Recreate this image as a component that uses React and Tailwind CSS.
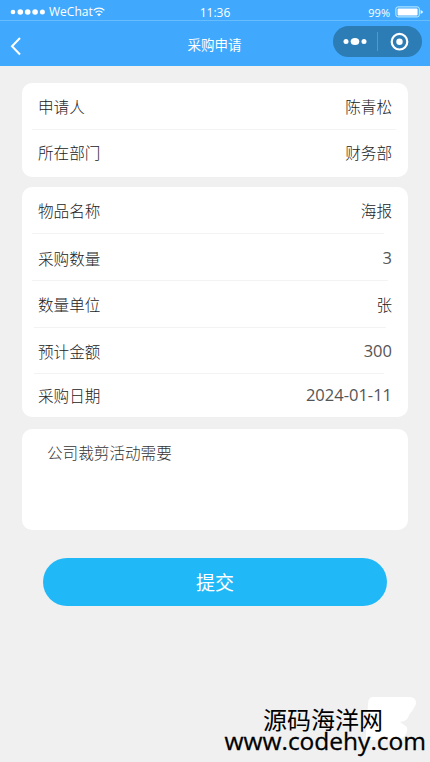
const applicant = [
  { label: "申请人", value: "陈青松", row: "h-[47px] pt-[4px]", line: "ml-[10px] mr-[12px]" },
  { label: "所在部门", value: "财务部", row: "h-[47px] pt-[1px]" },
];

const purchase = [
  { label: "物品名称", value: "海报", row: "h-[47px] pt-[3px]", line: "ml-[10px] mr-[24px]" },
  { label: "采购数量", value: "3", row: "h-[47px] pt-[5px]", line: "ml-[10px] mr-[20px]" },
  { label: "数量单位", value: "张", row: "h-[47px] pt-[4px]", line: "ml-[12px] mr-[22px]" },
  { label: "预计金额", value: "300", row: "h-[46px] pt-[4px]", line: "ml-[12px] mr-[24px]" },
  { label: "采购日期", value: "2024-01-11", row: "h-[43px] pt-[2px]" },
];

function StatusBar() {
  return (
    <div className="grid h-[21px] grid-cols-3 items-center border-b border-[#67bcfb] pr-[6px] pl-[10px] text-[12px] leading-none">
      <div className="flex items-center pt-[3px]">
        <svg width="36" height="6" viewBox="0 0 36 6" fill="currentColor">
          <circle cx="3" cy="3" r="2.3" />
          <circle cx="10.3" cy="3" r="2.8" />
          <circle cx="17.7" cy="3" r="2.8" />
          <circle cx="25.1" cy="3" r="2.8" />
          <circle cx="32.4" cy="3" r="2.5" />
        </svg>
        <span className="ml-[3px] pt-px">WeChat</span>
        <svg
          width="12"
          height="10"
          viewBox="0 0 12 10"
          fill="none"
          stroke="currentColor"
          strokeWidth="1.3"
          className="shrink-0"
        >
          <path d="M0.6 3.4C3.6 0.4 8.4 0.4 11.4 3.4M2.6 5.5C4.5 3.7 7.5 3.7 9.4 5.5" />
          <path d="M4 7.2Q6 5.7 8 7.2L6 9.2Z" fill="currentColor" stroke="none" />
        </svg>
      </div>
      <div className="pt-[5px] pr-[4px] text-center">11:36</div>
      <div className="flex items-center justify-end pt-[3px]">
        <span className="pt-[2px] text-[11px]">99%</span>
        <svg width="29" height="12" viewBox="0 0 29 12" className="ml-[5px]">
          <rect x="0.9" y="0.9" width="23.4" height="10" rx="2" fill="none" stroke="#c5f0ff" />
          <rect x="2.6" y="2.4" width="20" height="7" rx="1" fill="white" />
          <path d="M25.6 3.8L28.3 6L25.6 8.2Z" fill="#dff6ff" />
        </svg>
      </div>
    </div>
  );
}

function NavBar() {
  return (
    <div className="grid h-[45px] grid-cols-3 items-center pr-[8px] pl-[10px]">
      <svg
        width="12"
        height="20"
        viewBox="0 0 12 20"
        fill="none"
        stroke="currentColor"
        strokeWidth="2"
        className="mt-[4px]"
      >
        <path d="M10 2L2 10.2L10 18.5" />
      </svg>
      <h1 className="pt-[4px] pr-[3px] text-center text-[13.5px]">采购申请</h1>
      {/* mini program capsule */}
      <div className="mt-[-4px] flex h-[31px] w-[89px] items-center justify-self-end rounded-full bg-[#2c7cb6]">
        <svg width="89" height="31" viewBox="0 0 89 31" fill="white">
          <circle cx="13" cy="15.5" r="2.5" />
          <ellipse cx="22" cy="15.5" rx="4.3" ry="3.5" />
          <circle cx="31" cy="15.5" r="2.5" />
          <path d="M44.5 6V25" stroke="#5199cc" />
          <circle cx="66.5" cy="15.7" r="7.8" fill="none" stroke="white" strokeWidth="2.2" />
          <circle cx="66.5" cy="15.7" r="3.2" />
        </svg>
      </div>
    </div>
  );
}

function Card({ rows }) {
  return (
    <section className="rounded-[10px] bg-white">
      {rows.map(({ label, value, row, line }) => (
        <div key={label} className={`flex flex-col ${row}`}>
          <div className="flex flex-1 items-center justify-between pr-[16px] pl-[16px]">
            <span>{label}</span>
            {/^\d/.test(value) ? (
              <span className="pb-[2px] text-[16.5px] font-normal text-[#555]">{value}</span>
            ) : (
              <span>{value}</span>
            )}
          </div>
          {line && <div className={`h-px bg-[#f3f3f3] ${line}`} />}
        </div>
      ))}
    </section>
  );
}

export default function App() {
  return (
    <div className="relative h-[762px] w-[430px] overflow-hidden bg-[#f0f0f0] font-['Open_Sans','Noto_Sans_CJK_SC',sans-serif]">
      <header className="bg-[#40a9fd] text-white">
        <StatusBar />
        <NavBar />
      </header>

      <main className="flex flex-col px-[22px] pt-[17px] text-[15.6px] leading-none font-light text-[#222]">
        <Card rows={applicant} />
        <div className="mt-[10px]">
          <Card rows={purchase} />
        </div>
        <section className="mt-[12px] h-[101px] rounded-[10px] bg-white px-[25px] pt-[17px] text-[#333]">
          公司裁剪活动需要
        </section>
        <button className="mx-[21px] mt-[28px] h-[48px] rounded-full bg-[#20b8f7] pt-[3px] text-[19px] font-normal text-white">
          提交
        </button>
      </main>

      {/* site watermark */}
      <svg
        className="absolute right-[10px] bottom-[10px]"
        width="56"
        height="58"
        viewBox="0 0 56 58"
        fill="white"
      >
        <path d="M8 3H46Q53 4 52 10Q49 17 45 21Q44 27 36 28L43 33Q45 40 36 46H2V38L4 10Q4 4 8 3Z" />
      </svg>
      <div className="absolute right-[4px] bottom-[11px] text-black">
        <p className="pr-[43px] text-right text-[24px] leading-[22px]">源码海洋网</p>
        <p className="text-right text-[24.5px] leading-[20px] [-webkit-text-stroke:0.3px_black]">
          www.codehy.com
        </p>
      </div>
    </div>
  );
}
